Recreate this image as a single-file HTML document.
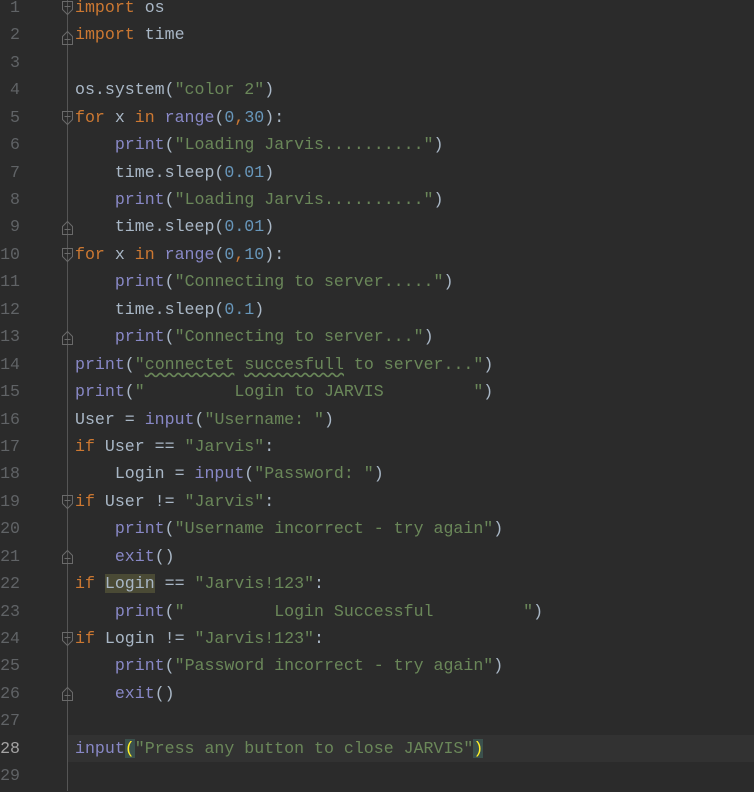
<!DOCTYPE html>
<html><head><meta charset="utf-8"><style>
body{margin:0;width:754px;height:791px;background:#2b2b2b;overflow:hidden;position:relative;font-family:"Liberation Mono",monospace;font-size:16.6px;}
#wrap{position:absolute;left:0;top:1px;width:754px;height:791px}
.ln{position:absolute;left:0;width:20px;text-align:right;color:#606366;line-height:27.43px;}
.l{position:absolute;left:75px;color:#a9b7c6;line-height:27.43px;white-space:pre;}
.k{color:#cc7832}.b{color:#8888c6}.s{color:#6a8759}.n{color:#6897bb}
.w{text-decoration:underline wavy #6a8759;text-underline-offset:3px}
#sep{position:absolute;left:67px;top:0;width:1px;height:791px;background:#555}
#cur{position:absolute;left:68px;right:0;top:735px;height:27px;background:#323232}
</style></head><body>
<div id="cur"></div>
<div id="sep"></div>
<div id="wrap">
<div class="ln" style="top:-7px">1</div><div class="ln" style="top:20.4px">2</div><div class="ln" style="top:47.9px">3</div><div class="ln" style="top:75.3px">4</div><div class="ln" style="top:102.7px">5</div><div class="ln" style="top:130.2px">6</div><div class="ln" style="top:157.6px">7</div><div class="ln" style="top:185px">8</div><div class="ln" style="top:212.4px">9</div><div class="ln" style="top:239.9px">10</div><div class="ln" style="top:267.3px">11</div><div class="ln" style="top:294.7px">12</div><div class="ln" style="top:322.2px">13</div><div class="ln" style="top:349.6px">14</div><div class="ln" style="top:377px">15</div><div class="ln" style="top:404.5px">16</div><div class="ln" style="top:431.9px">17</div><div class="ln" style="top:459.3px">18</div><div class="ln" style="top:486.7px">19</div><div class="ln" style="top:514.2px">20</div><div class="ln" style="top:541.6px">21</div><div class="ln" style="top:569px">22</div><div class="ln" style="top:596.5px">23</div><div class="ln" style="top:623.9px">24</div><div class="ln" style="top:651.3px">25</div><div class="ln" style="top:678.8px">26</div><div class="ln" style="top:706.2px">27</div><div class="ln" style="top:733.6px;color:#a4a3a3">28</div><div class="ln" style="top:761px">29</div>

<div class="l" style="top:-7px"><span class="k">import</span> os</div>
<div class="l" style="top:20.4px"><span class="k">import</span> time</div>
<div class="l" style="top:75.3px">os.system(<span class="s">"color 2"</span>)</div>
<div class="l" style="top:102.7px"><span class="k">for</span> x <span class="k">in</span> <span class="b">range</span>(<span class="n">0</span><span class="k">,</span><span class="n">30</span>):</div>
<div class="l" style="top:130.2px">    <span class="b">print</span>(<span class="s">"Loading Jarvis.........."</span>)</div>
<div class="l" style="top:157.6px">    time.sleep(<span class="n">0.01</span>)</div>
<div class="l" style="top:185px">    <span class="b">print</span>(<span class="s">"Loading Jarvis.........."</span>)</div>
<div class="l" style="top:212.4px">    time.sleep(<span class="n">0.01</span>)</div>
<div class="l" style="top:239.9px"><span class="k">for</span> x <span class="k">in</span> <span class="b">range</span>(<span class="n">0</span><span class="k">,</span><span class="n">10</span>):</div>
<div class="l" style="top:267.3px">    <span class="b">print</span>(<span class="s">"Connecting to server....."</span>)</div>
<div class="l" style="top:294.7px">    time.sleep(<span class="n">0.1</span>)</div>
<div class="l" style="top:322.2px">    <span class="b">print</span>(<span class="s">"Connecting to server..."</span>)</div>
<div class="l" style="top:349.6px"><span class="b">print</span>(<span class="s">"<span class="w">connectet</span> <span class="w">succesfull</span> to server..."</span>)</div>
<div class="l" style="top:377px"><span class="b">print</span>(<span class="s">"         Login to JARVIS         "</span>)</div>
<div class="l" style="top:404.5px">User = <span class="b">input</span>(<span class="s">"Username: "</span>)</div>
<div class="l" style="top:431.9px"><span class="k">if</span> User == <span class="s">"Jarvis"</span>:</div>
<div class="l" style="top:459.3px">    Login = <span class="b">input</span>(<span class="s">"Password: "</span>)</div>
<div class="l" style="top:486.7px"><span class="k">if</span> User != <span class="s">"Jarvis"</span>:</div>
<div class="l" style="top:514.2px">    <span class="b">print</span>(<span class="s">"Username incorrect - try again"</span>)</div>
<div class="l" style="top:541.6px">    <span class="b">exit</span>()</div>
<div class="l" style="top:569px"><span class="k">if</span> <span style="background:#4a4a35">Login</span> == <span class="s">"Jarvis!123"</span>:</div>
<div class="l" style="top:596.5px">    <span class="b">print</span>(<span class="s">"         Login Successful         "</span>)</div>
<div class="l" style="top:623.9px"><span class="k">if</span> Login != <span class="s">"Jarvis!123"</span>:</div>
<div class="l" style="top:651.3px">    <span class="b">print</span>(<span class="s">"Password incorrect - try again"</span>)</div>
<div class="l" style="top:678.8px">    <span class="b">exit</span>()</div>
<div class="l" style="top:733.6px"><span class="b">input</span><span style="background:#3b514d;color:#ffef28">(</span><span class="s">"Press any button to close JARVIS"</span><span style="background:#3b514d;color:#ffef28">)</span></div>
</div>
<svg width="80" height="791" style="position:absolute;left:0;top:0" fill="none" stroke="#6a6a6a" stroke-width="1">
<path d="M62.5 1.5h10v8l-5 5l-5-5z"/><path d="M64.5 6.5h6"/>
<path d="M62.5 44.5h10v-8l-5-5l-5 5z"/><path d="M64.5 39.5h6"/>
<path d="M62.5 111.5h10v8l-5 5l-5-5z"/><path d="M64.5 116.5h6"/>
<path d="M62.5 234.5h10v-8l-5-5l-5 5z"/><path d="M64.5 229.5h6"/>
<path d="M62.5 248.5h10v8l-5 5l-5-5z"/><path d="M64.5 253.5h6"/>
<path d="M62.5 344.5h10v-8l-5-5l-5 5z"/><path d="M64.5 339.5h6"/>
<path d="M62.5 495.5h10v8l-5 5l-5-5z"/><path d="M64.5 500.5h6"/>
<path d="M62.5 563.5h10v-8l-5-5l-5 5z"/><path d="M64.5 558.5h6"/>
<path d="M62.5 632.5h10v8l-5 5l-5-5z"/><path d="M64.5 637.5h6"/>
<path d="M62.5 700.5h10v-8l-5-5l-5 5z"/><path d="M64.5 695.5h6"/>
</svg>
</body></html>
